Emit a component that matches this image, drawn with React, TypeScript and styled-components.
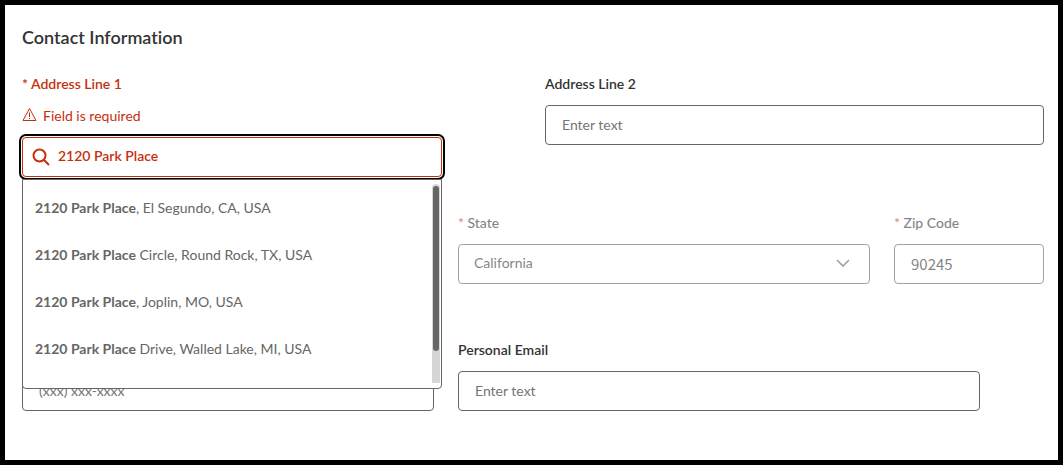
import React, { useState } from "react";
import styled, { createGlobalStyle, css } from "styled-components";

const GlobalStyle = createGlobalStyle`
  * { box-sizing: border-box; }
  body { margin: 0; background: #000; }
`;

const red = "#c5300c";
const grey = "#666";
const sans = `Lato, "Open Sans", sans-serif`;
const digits = `"Noto Sans CJK SC", "Noto Sans", sans-serif`;

const Page = styled.main`
  border: 5px solid #000;
  background: #fff;
  padding: 20px 14px 49px 17px;
  font-family: ${sans};
  font-size: 14px;
  line-height: 20px;
  font-variant-ligatures: none;
  color: #333;
`;

const Title = styled.h1`
  margin: 0 0 25px;
  font-size: 18px;
  line-height: 24px;
  font-weight: 600;
`;

const Row = styled.div<{ $columns: string; $after?: number }>`
  display: grid;
  grid-template-columns: ${(p) => p.$columns};
  column-gap: 24px;
  align-items: start;
  margin-bottom: ${(p) => p.$after ?? 0}px;
`;

const Field = styled.div<{ $disabled?: boolean; $column?: number }>`
  display: flex;
  flex-direction: column;
  gap: 11px;
  min-width: 0;
  opacity: ${(p) => (p.$disabled ? 0.6 : 1)};
  ${(p) => p.$column && css`grid-column-start: ${p.$column};`}
`;

const PhoneField = styled(Field)`
  grid-column: 1;
  grid-row: 1;
  align-self: end;
`;

const Label = styled.label<{ $error?: boolean; $plain?: boolean }>`
  font-weight: ${(p) => (p.$plain ? 500 : 600)};
  color: ${(p) => (p.$error ? red : "#333")};
`;

const Star = styled.span`
  color: ${red};
`;

const control = css`
  width: 100%;
  height: 40px;
  border: 1px solid ${grey};
  border-radius: 4px;
  background: #fff;
  color: #333;
  font-size: 14px;
  line-height: 20px;
  margin: 0;
  opacity: 1;
`;

const TextInput = styled.input<{ $digits?: boolean }>`
  ${control}
  padding: 0 16px 2px;
  font-family: ${(p) => (p.$digits ? digits : sans)};
  ${(p) => p.$digits && css`font-size: 15px;`}
  &::placeholder { color: #757575; opacity: 1; }
`;

const SelectWrap = styled.div`
  position: relative;
`;

const Select = styled.select`
  ${control}
  appearance: none;
  padding: 0 40px 2px 15px;
  font-family: ${sans};
  display: block;
`;

const Chevron = styled.svg`
  position: absolute;
  right: 20px;
  top: 15px;
  pointer-events: none;
`;

const ErrorText = styled.p`
  display: flex;
  align-items: flex-start;
  gap: 6px;
  margin: 1px 0 0;
  color: ${red};
`;

const Combo = styled.div`
  position: relative;
  width: calc(100% - 79px);
`;

const SearchInput = styled.input`
  ${control}
  display: block;
  padding: 0 16px 3px 35px;
  border-color: ${red};
  color: ${red};
  font-family: ${sans};
  font-weight: 600;
  outline: 2px solid #000;
  outline-offset: 1px;
`;

const SearchIcon = styled.svg`
  position: absolute;
  left: 10px;
  top: 11px;
  pointer-events: none;
`;

const Menu = styled.div`
  position: absolute;
  z-index: 1;
  top: 42px;
  left: 0;
  right: 0;
  height: 210px;
  border: 1px solid ${grey};
  border-radius: 0 0 4px 4px;
  background: #fff;
`;

const Options = styled.ul`
  list-style: none;
  margin: 0;
  padding: 4px 12px 0;
  color: ${grey};
`;

const Option = styled.li`
  height: 47px;
  line-height: 47px;
  white-space: nowrap;
`;

const Track = styled.div`
  position: absolute;
  top: 4px;
  right: 1px;
  bottom: 5px;
  width: 8px;
  padding: 2px 1px;
  border-radius: 4px 4px 0 0;
  background: #d6d6d6;
`;

const Thumb = styled.div`
  height: 165px;
  border-radius: 3px;
  background: ${grey};
`;

const suggestions = [
  ", El Segundo, CA, USA",
  " Circle, Round Rock, TX, USA",
  ", Joplin, MO, USA",
  " Drive, Walled Lake, MI, USA",
];

export default function App() {
  const [address, setAddress] = useState("2120 Park Place");
  return (
    <>
      <GlobalStyle />
      <Page>
        <Title>Contact Information</Title>

        <Row $columns="1fr 1fr" $after={36}>
          <Field>
            <Label htmlFor="address1" $error>
              * Address Line 1
            </Label>
            <ErrorText id="address1-error">
              <svg width="15" height="16" viewBox="0 0 15 16" fill="none" stroke={red} aria-hidden="true">
                <path d="M7.5 2.5 L14 14.5 H1 Z" strokeLinejoin="round" />
                <path d="M7.5 6.5 V11 M7.5 12 V13" />
              </svg>
              Field is required
            </ErrorText>
            <Combo>
              <SearchInput
                id="address1"
                role="combobox"
                aria-expanded="true"
                aria-controls="address1-list"
                aria-invalid="true"
                aria-describedby="address1-error"
                value={address}
                onChange={(e) => setAddress(e.target.value)}
              />
              <SearchIcon width="18" height="18" viewBox="0 0 18 18" fill="none" stroke={red} strokeWidth="2" aria-hidden="true">
                <circle cx="7.5" cy="7.5" r="6" />
                <path d="M11.8 11.8 L17 17" />
              </SearchIcon>
              <Menu>
                <Options id="address1-list" role="listbox">
                  {suggestions.map((rest) => (
                    <Option key={rest} role="option" aria-selected="false">
                      <b>2120 Park Place</b>
                      {rest}
                    </Option>
                  ))}
                </Options>
                <Track>
                  <Thumb />
                </Track>
              </Menu>
            </Combo>
          </Field>
          <Field>
            <Label htmlFor="address2">Address Line 2</Label>
            <TextInput id="address2" placeholder="Enter text" />
          </Field>
        </Row>

        <Row $columns="412fr 412fr 150fr" $after={56}>
          <Field $disabled $column={2}>
            <Label htmlFor="state" $plain>
              <Star>*</Star> State
            </Label>
            <SelectWrap>
              <Select id="state" disabled defaultValue="CA">
                <option value="CA">California</option>
              </Select>
              <Chevron width="14" height="9" viewBox="0 0 14 9" fill="none" stroke={grey} strokeWidth="1.6" aria-hidden="true">
                <path d="M1 1 L7 7 L13 1" />
              </Chevron>
            </SelectWrap>
          </Field>
          <Field $disabled $column={3}>
            <Label htmlFor="zip" $plain>
              <Star>*</Star> Zip Code
            </Label>
            <TextInput id="zip" $digits disabled defaultValue="90245" />
          </Field>
        </Row>

        <Row $columns="412fr 522fr 40fr">
          <Field $column={2}>
            <Label htmlFor="email">Personal Email</Label>
            <TextInput id="email" type="email" placeholder="Enter text" />
          </Field>
          <PhoneField>
            <TextInput type="tel" aria-label="Phone" placeholder="(xxx) xxx-xxxx" />
          </PhoneField>
        </Row>
      </Page>
    </>
  );
}
